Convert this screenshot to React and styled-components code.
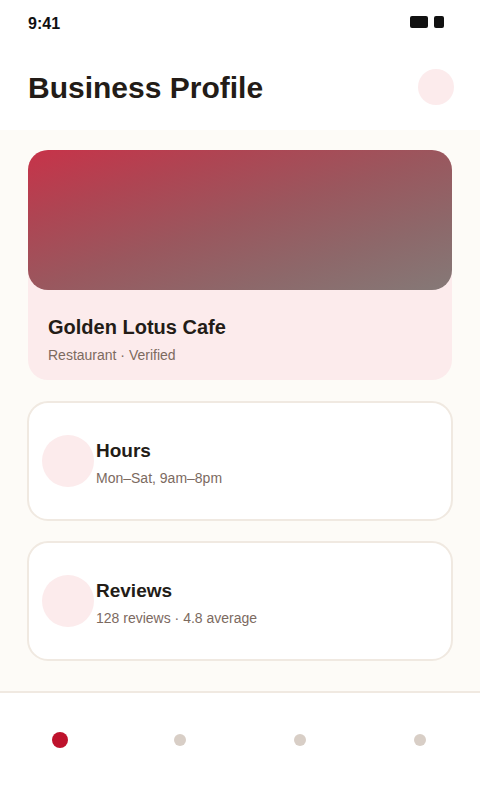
import React, { useState } from 'react';
import styled, { createGlobalStyle } from 'styled-components';

const GlobalStyle = createGlobalStyle`
  * {
    box-sizing: border-box;
  }

  body {
    margin: 0;
    background-color: #ffffff;
    color: #231c17;
    font-family: "Liberation Sans", Arial, sans-serif;
  }

  h1, h2, p {
    margin: 0;
  }
`;

const Page = styled.div`
  display: flex;
  flex-direction: column;
  min-height: 100vh;
`;

const StatusBar = styled.div`
  display: flex;
  justify-content: space-between;
  height: 44px;
  padding: 16px 36px 0 28px;
  color: #111111;
`;

const Time = styled.span`
  font-size: 16px;
  font-weight: bold;
  line-height: 16px;
`;

const StatusIcons = styled.div`
  display: flex;
  gap: 6px;
`;

const StatusIcon = styled.span`
  width: ${props => props.$width}px;
  height: 12px;
  border-radius: 2px;
  background-color: #111111;
`;

const Header = styled.header`
  display: flex;
  justify-content: space-between;
  align-items: flex-start;
  padding: 25px 26px 23px 28px;
`;

const PageTitle = styled.h1`
  font-size: 30px;
  line-height: 38px;
`;

const AvatarButton = styled.button`
  width: 36px;
  height: 36px;
  padding: 0;
  border: none;
  border-radius: 50%;
  background-color: #fcebec;
  cursor: pointer;
`;

const Content = styled.main`
  flex: 1;
  padding: 20px 28px 30px;
  background-color: #fdfbf7;
`;

const HeroCard = styled.section`
  border-radius: 20px;
  background-color: #fcebec;
`;

const Cover = styled.div`
  height: 140px;
  border-radius: 20px;
  background-image: linear-gradient(
    to bottom right,
    #c73349,
    #ae4553 25%,
    #9a575e 50%,
    #8d686a 75%,
    #857977
  );
`;

const HeroText = styled.div`
  display: grid;
  gap: 6px;
  padding: 25px 20px 15px;
`;

const Name = styled.h2`
  font-size: 20px;
  line-height: 24px;
`;

const Detail = styled.p`
  color: #7c6a5f;
  font-size: 14px;
  line-height: 20px;
`;

const CardList = styled.div`
  display: grid;
  gap: 20px;
  margin: 21px -1px 0;
`;

const Card = styled.section`
  display: flex;
  align-items: flex-start;
  gap: 2px;
  padding: 32px 13px 31px;
  border: 2px solid #f0e9e1;
  border-radius: 21px;
  background-color: #ffffff;
`;

const CardIcon = styled.span`
  flex: none;
  width: 52px;
  height: 52px;
  border-radius: 50%;
  background-color: #fcebec;
`;

const CardText = styled.div`
  display: grid;
  gap: 5px;
  padding-top: 4px;
`;

const CardTitle = styled.h2`
  font-size: 19px;
  line-height: 24px;
`;

const TabBar = styled.nav`
  display: grid;
  grid-template-columns: repeat(4, 1fr);
  border-top: 2px solid #f0e9e1;
  padding-bottom: 1px;
`;

const Tab = styled.button`
  display: flex;
  align-items: center;
  justify-content: center;
  height: 94px;
  padding: 0;
  border: none;
  background: none;
  cursor: pointer;
`;

const Dot = styled.span`
  width: ${props => (props.$active ? 16 : 12)}px;
  height: ${props => (props.$active ? 16 : 12)}px;
  border-radius: 50%;
  background-color: ${props => (props.$active ? '#be122c' : '#d8cec6')};
`;

const cards = [
  { title: 'Hours', detail: 'Mon–Sat, 9am–8pm' },
  { title: 'Reviews', detail: '128 reviews · 4.8 average' },
];

const tabs = ['Profile', 'Search', 'Messages', 'Settings'];

const App = () => {
  const [activeTab, setActiveTab] = useState('Profile');

  return (
    <Page>
      <GlobalStyle />
      <StatusBar>
        <Time>9:41</Time>
        <StatusIcons>
          <StatusIcon $width={18} />
          <StatusIcon $width={10} />
        </StatusIcons>
      </StatusBar>
      <Header>
        <PageTitle>Business Profile</PageTitle>
        <AvatarButton type="button" aria-label="Account" />
      </Header>
      <Content>
        <HeroCard>
          <Cover />
          <HeroText>
            <Name>Golden Lotus Cafe</Name>
            <Detail>Restaurant · Verified</Detail>
          </HeroText>
        </HeroCard>
        <CardList>
          {cards.map(card => (
            <Card key={card.title}>
              <CardIcon />
              <CardText>
                <CardTitle>{card.title}</CardTitle>
                <Detail>{card.detail}</Detail>
              </CardText>
            </Card>
          ))}
        </CardList>
      </Content>
      <TabBar>
        {tabs.map(tab => (
          <Tab
            key={tab}
            type="button"
            aria-label={tab}
            onClick={() => setActiveTab(tab)}
          >
            <Dot $active={tab === activeTab} />
          </Tab>
        ))}
      </TabBar>
    </Page>
  );
};

export default App;
